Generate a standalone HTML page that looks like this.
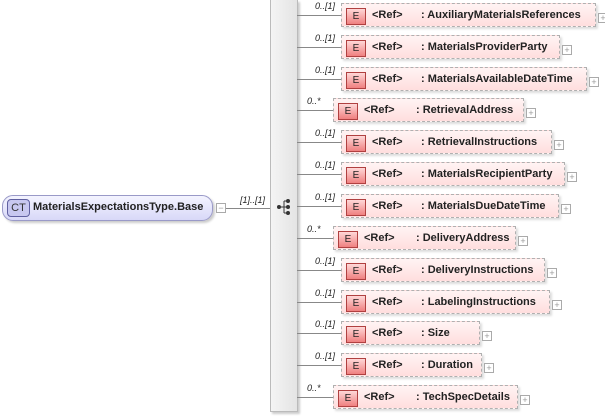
<!DOCTYPE html>
<html><head><meta charset="utf-8"><style>
body{margin:0;width:605px;height:417px;background:#fff;position:relative;overflow:hidden;font-family:"Liberation Sans",sans-serif;}
.a{position:absolute}
.box{position:absolute;height:22px;border:1px dashed #b0b0b0;background:linear-gradient(#fff4f4,#ffdede);box-shadow:2px 2px 2px #ddd;}
.e{position:absolute;left:4px;top:4px;width:18px;height:15px;border:1px solid #b04040;background:linear-gradient(#ffd8d8,#f08080);font-size:10px;text-align:center;line-height:16px;color:#222}
.t{position:absolute;top:4px;font-size:11px;font-weight:bold;color:#222;white-space:nowrap}
.p{position:absolute;width:8px;height:8px;border:1px solid #aaa;background:#fff;font-size:9px;line-height:8px;text-align:center;color:#999}
.l{position:absolute;height:1px;background:#888}
.c{position:absolute;font-size:9px;font-style:italic;color:#222}
</style></head><body>
<div class="a" style="left:2px;top:195px;width:209px;height:24px;border:1px solid #9a9ac8;border-radius:11px;background:linear-gradient(#f4f4ff,#d8d8f8);box-shadow:2px 2px 2px #ccc"></div>
<div class="a" style="left:7px;top:199px;width:21px;height:16px;border:1px solid #6060a0;border-radius:4px;background:#c8c8f0;font-size:11px;line-height:16px;text-align:center;color:#333">CT</div>
<div class="a" style="left:33px;top:201px;font-size:11px;font-weight:bold;color:#222">MaterialsExpectationsType.Base</div>
<div class="p" style="left:216px;top:203px">−</div>
<div class="l" style="left:226px;top:208px;width:44px"></div>
<div class="c" style="left:240px;top:195px">[1]..[1]</div>
<div class="a" style="left:270px;top:0;width:26px;height:411px;background:linear-gradient(90deg,#f4f4f4,#e4e4e4);border:1px solid #bbb;border-top:none;box-shadow:2px 2px 2px #ccc"></div>
<svg class="a" style="left:276px;top:198px" width="16" height="18"><line x1="2" y1="9" x2="8" y2="9" stroke="#333"/><line x1="8" y1="3" x2="8" y2="15" stroke="#333"/><line x1="8" y1="3" x2="12" y2="3" stroke="#333"/><line x1="8" y1="9" x2="12" y2="9" stroke="#333"/><line x1="8" y1="15" x2="12" y2="15" stroke="#333"/><circle cx="3" cy="9" r="2" fill="#333"/><circle cx="12" cy="3" r="2" fill="#333"/><circle cx="12" cy="9" r="2" fill="#333"/><circle cx="12" cy="15" r="2" fill="#333"/></svg>
<div id="rows"></div>
<script>
var R=[[3,341,594,"0..[1]","AuxiliaryMaterialsReferences"],[35,341,558,"0..[1]","MaterialsProviderParty"],[67,341,585,"0..[1]","MaterialsAvailableDateTime"],[98,333,522,"0..*","RetrievalAddress"],[130,341,550,"0..[1]","RetrievalInstructions"],[162,341,563,"0..[1]","MaterialsRecipientParty"],[194,341,557,"0..[1]","MaterialsDueDateTime"],[226,333,514,"0..*","DeliveryAddress"],[258,341,543,"0..[1]","DeliveryInstructions"],[290,341,548,"0..[1]","LabelingInstructions"],[321,341,478,"0..[1]","Size"],[353,341,480,"0..[1]","Duration"],[385,333,516,"0..*","TechSpecDetails"]];
var h="";R.forEach(function(r){var y=r[0],x=r[1],w=r[2]-x;
h+='<div class="l" style="left:297px;top:'+(y+12)+'px;width:'+(x-297)+'px"></div>';
h+='<div class="c" style="left:'+(x-26)+'px;top:'+(y-2)+'px">'+r[3]+'</div>';
h+='<div class="box" style="left:'+x+'px;top:'+y+'px;width:'+w+'px"><div class="e">E</div><div class="t" style="left:30px;top:5px">&lt;Ref&gt;</div><div class="t" style="left:'+(x==341?79:82)+'px;top:5px">: '+r[4]+'</div></div>';
h+='<div class="p" style="left:'+(r[2]+4)+'px;top:'+(y+10)+'px">+</div>';});
document.getElementById("rows").innerHTML=h;
</script>
</body></html>
